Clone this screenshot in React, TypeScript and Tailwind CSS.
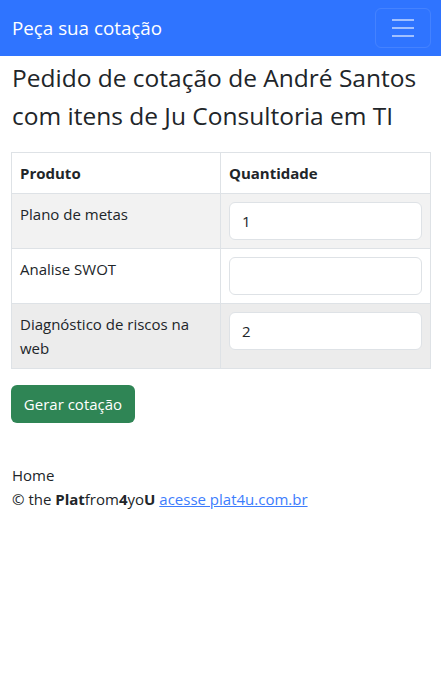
import React from "react";

export default function App() {
  const rows = [
    { name: "Plano de metas", qty: "1", bg: "bg-[#f2f2f2]" },
    { name: "Analise SWOT", qty: "", bg: "bg-white" },
    { name: "Diagnóstico de riscos na web", qty: "2", bg: "bg-[#ececec]" },
  ];
  return (
    <div
      className="min-h-screen bg-white text-[#212529] text-[15px] leading-6"
      style={{ fontFamily: '"Open Sans", "Noto Sans", sans-serif' }}
    >
      <nav className="h-14 bg-[#2f74ff] flex items-center justify-between pl-3 pr-[10px]">
        <span className="text-white text-[18.8px] leading-[30px]">Peça sua cotação</span>
        <button className="w-14 h-10 rounded-md border border-white/10 flex items-center justify-center">
          <svg width="30" height="30" viewBox="0 0 30 30">
            <path
              d="M4 7h22M4 15h22M4 23h22"
              stroke="rgba(255,255,255,0.55)"
              strokeWidth="2"
              strokeLinecap="butt"
            />
          </svg>
        </button>
      </nav>
      <main className="px-[11px]">
        <h2 className="mt-[3px] mb-[17px] pl-[1px] text-[24.5px] leading-[38px] font-medium">
          Pedido de cotação de André Santos com itens de Ju Consultoria em TI
        </h2>
        <table className="w-[420px] border-collapse border border-[#dee2e6]">
          <thead>
            <tr>
              <th className="w-[209px] border border-[#dee2e6] p-2 text-left font-bold align-top">Produto</th>
              <th className="border border-[#dee2e6] p-2 text-left font-bold align-top">Quantidade</th>
            </tr>
          </thead>
          <tbody>
            {rows.map((r) => (
              <tr key={r.name} className={r.bg}>
                <td className="border border-[#dee2e6] p-2 align-top">{r.name}</td>
                <td className="border border-[#dee2e6] p-2 align-top">
                  <input
                    defaultValue={r.qty}
                    className="block w-full h-[38px] px-3 rounded-md border border-[#dee2e6] bg-white text-[15px] text-[#212529] outline-none"
                  />
                </td>
              </tr>
            ))}
          </tbody>
        </table>
        <button className="mt-4 h-[38px] w-[124px] rounded-md bg-[#2f8555] text-white text-[15px] text-center">
          Gerar cotação
        </button>
        <footer className="mt-10 pl-[1px]">
          <div>Home</div>
          <div>
            © the <b>Plat</b>from<b>4</b>yo<b>U</b>{" "}
            <a href="#" className="text-[#3d7dfd] underline">
              acesse plat4u.com.br
            </a>
          </div>
        </footer>
      </main>
    </div>
  );
}
